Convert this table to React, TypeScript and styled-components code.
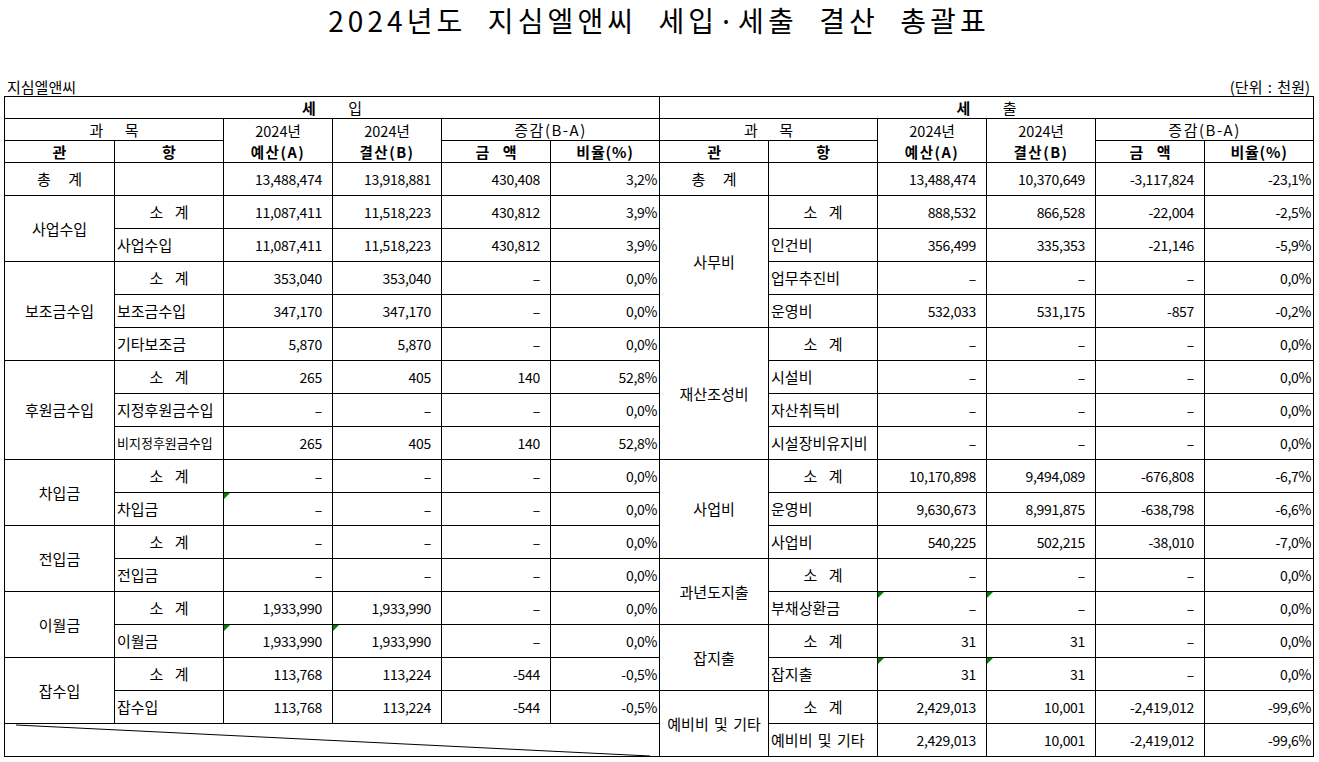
import React from 'react';
import styled, { createGlobalStyle } from 'styled-components';

const Global = createGlobalStyle`
  html, body { margin: 0; padding: 0; background: #fff; }
  body {
    font-family: "Noto Sans CJK KR", "Noto Sans", sans-serif;
    color: #000;
  }
`;

const Page = styled.div`
  width: 1319px;
  padding-left: 4px;
  box-sizing: border-box;
`;

const Title = styled.h1`
  margin: 0;
  width: 1310px;
  height: 40px;
  line-height: 40px;
  font-size: 28px;
  font-weight: 400;
  letter-spacing: 4.1px;
  word-spacing: 11px;
  text-align: center;
  white-space: nowrap;
`;

const Meta = styled.div`
  margin-top: 38px;
  width: 1310px;
  height: 18px;
  display: flex;
  align-items: center;
  justify-content: space-between;
  box-sizing: border-box;
  padding: 0 4px 0 3px;
  font-size: 15px;
  line-height: 18px;
  word-spacing: 2px;
`;

const Sheet = styled.table`
  border-collapse: collapse;
  table-layout: fixed;
  width: 1310px;
  font-size: 15px;
  line-height: 18px;
`;

const HeadRow = styled.tr`
  height: 22px;
`;

const BodyRow = styled.tr`
  height: 33px;
`;

const Head = styled.th<{ $bold?: boolean; $ls?: number }>`
  border: 1px solid #000;
  padding: 0;
  font-weight: ${(p) => (p.$bold ? 700 : 400)};
  letter-spacing: ${(p) => p.$ls ?? 0}px;
  text-align: center;
  vertical-align: middle;
  white-space: nowrap;
`;

const StackHead = styled(Head)`
  font-size: 14.5px;
  line-height: 21px;
`;

const Strong = styled.span<{ $ls?: number }>`
  font-weight: 700;
  letter-spacing: ${(p) => p.$ls ?? 0}px;
`;

const Spaced = styled.span<{ $ws: number }>`
  word-spacing: ${(p) => p.$ws}px;
  white-space: pre;
`;

const Cell = styled.td<{
  $align?: 'left' | 'center' | 'right';
  $padR?: number;
  $padL?: number;
  $size?: number;
  $num?: boolean;
  $flag?: boolean;
}>`
  position: relative;
  border: 1px solid #000;
  padding: 0 ${(p) => p.$padR ?? 0}px 0 ${(p) => p.$padL ?? 0}px;
  text-align: ${(p) => p.$align ?? 'center'};
  vertical-align: middle;
  white-space: nowrap;
  overflow: hidden;
  font-size: ${(p) => p.$size ?? (p.$num ? 14 : 15)}px;
  letter-spacing: ${(p) => (p.$num ? -0.3 : 0)}px;
  word-spacing: 2px;
  &::before {
    content: '';
    display: ${(p) => (p.$flag ? 'block' : 'none')};
    position: absolute;
    top: 0;
    left: 0;
    width: 0;
    height: 0;
    border-style: solid;
    border-width: 6px 6px 0 0;
    border-color: #008000 transparent transparent transparent;
  }
`;

const DiagCell = styled.td`
  border: 1px solid #000;
  padding: 0;
`;

const Diagonal = styled.svg`
  display: block;
  width: 100%;
  height: 32px;
`;

type Side = {
  group?: [string, number, number?];
  item: string;
  v: [string, string, string, string];
  f?: [boolean, boolean];
  size?: number;
};

const SUB = '소 계';
const D = '–';

const left: (Side | null)[] = [
  { group: ['사업수입', 2], item: SUB, v: ['11,087,411', '11,518,223', '430,812', '3,9%'] },
  { item: '사업수입', v: ['11,087,411', '11,518,223', '430,812', '3,9%'] },
  { group: ['보조금수입', 3], item: SUB, v: ['353,040', '353,040', D, '0,0%'] },
  { item: '보조금수입', v: ['347,170', '347,170', D, '0,0%'] },
  { item: '기타보조금', v: ['5,870', '5,870', D, '0,0%'] },
  { group: ['후원금수입', 3], item: SUB, v: ['265', '405', '140', '52,8%'] },
  { item: '지정후원금수입', v: [D, D, D, '0,0%'] },
  { item: '비지정후원금수입', v: ['265', '405', '140', '52,8%'], size: 13 },
  { group: ['차입금', 2], item: SUB, v: [D, D, D, '0,0%'] },
  { item: '차입금', v: [D, D, D, '0,0%'], f: [true, false] },
  { group: ['전입금', 2], item: SUB, v: [D, D, D, '0,0%'] },
  { item: '전입금', v: [D, D, D, '0,0%'] },
  { group: ['이월금', 2], item: SUB, v: ['1,933,990', '1,933,990', D, '0,0%'] },
  { item: '이월금', v: ['1,933,990', '1,933,990', D, '0,0%'], f: [true, true] },
  { group: ['잡수입', 2], item: SUB, v: ['113,768', '113,224', '-544', '-0,5%'] },
  { item: '잡수입', v: ['113,768', '113,224', '-544', '-0,5%'] },
  null,
];

const right: Side[] = [
  { group: ['사무비', 4], item: SUB, v: ['888,532', '866,528', '-22,004', '-2,5%'] },
  { item: '인건비', v: ['356,499', '335,353', '-21,146', '-5,9%'] },
  { item: '업무추진비', v: [D, D, D, '0,0%'] },
  { item: '운영비', v: ['532,033', '531,175', '-857', '-0,2%'] },
  { group: ['재산조성비', 4], item: SUB, v: [D, D, D, '0,0%'] },
  { item: '시설비', v: [D, D, D, '0,0%'] },
  { item: '자산취득비', v: [D, D, D, '0,0%'] },
  { item: '시설장비유지비', v: [D, D, D, '0,0%'] },
  { group: ['사업비', 3], item: SUB, v: ['10,170,898', '9,494,089', '-676,808', '-6,7%'] },
  { item: '운영비', v: ['9,630,673', '8,991,875', '-638,798', '-6,6%'] },
  { item: '사업비', v: ['540,225', '502,215', '-38,010', '-7,0%'] },
  { group: ['과년도지출', 2], item: SUB, v: [D, D, D, '0,0%'] },
  { item: '부채상환금', v: [D, D, D, '0,0%'], f: [true, true] },
  { group: ['잡지출', 2], item: SUB, v: ['31', '31', D, '0,0%'] },
  { item: '잡지출', v: ['31', '31', D, '0,0%'], f: [true, true] },
  { group: ['예비비 및 기타', 2], item: SUB, v: ['2,429,013', '10,001', '-2,419,012', '-99,6%'] },
  { item: '예비비 및 기타', v: ['2,429,013', '10,001', '-2,419,012', '-99,6%'] },
];

function renderSide(s: Side, key: string) {
  const cells: React.ReactNode[] = [];
  if (s.group) {
    cells.push(
      <Cell key={key + 'g'} rowSpan={s.group[1]} $size={s.group[2]}>
        {s.group[0]}
      </Cell>
    );
  }
  if (s.item === SUB) {
    cells.push(
      <Cell key={key + 'i'}>
        <Spaced $ws={8}>{SUB}</Spaced>
      </Cell>
    );
  } else {
    cells.push(
      <Cell key={key + 'i'} $align="left" $padL={2} $size={s.size}>
        {s.item}
      </Cell>
    );
  }
  cells.push(
    <Cell key={key + 'a'} $num $align="right" $padR={10} $flag={s.f?.[0]}>
      {s.v[0]}
    </Cell>,
    <Cell key={key + 'b'} $num $align="right" $padR={10} $flag={s.f?.[1]}>
      {s.v[1]}
    </Cell>,
    <Cell key={key + 'c'} $num $align="right" $padR={10}>
      {s.v[2]}
    </Cell>,
    <Cell key={key + 'd'} $num $align="right" $padR={2}>
      {s.v[3]}
    </Cell>
  );
  return cells;
}

function HeaderBlock({ first, second }: { first: string; second: string }) {
  return (
    <StackHead rowSpan={2}>
      {first}
      <br />
      <Strong $ls={1.5}>{second}</Strong>
    </StackHead>
  );
}

function TotalCells({ v }: { v: [string, string, string, string] }) {
  return (
    <>
      <Cell>
        <Spaced $ws={14}>총 계</Spaced>
      </Cell>
      <Cell />
      <Cell $num $align="right" $padR={10}>{v[0]}</Cell>
      <Cell $num $align="right" $padR={10}>{v[1]}</Cell>
      <Cell $num $align="right" $padR={10}>{v[2]}</Cell>
      <Cell $num $align="right" $padR={2}>{v[3]}</Cell>
    </>
  );
}

export default function App() {
  const cols = [110, 109, 109, 109, 109, 109, 109, 109, 109, 109, 109, 109];
  return (
    <Page>
      <Global />
      <Title>2024년도 지심엘앤씨 세입·세출 결산 총괄표</Title>
      <Meta>
        <span>지심엘앤씨</span>
        <span>(단위 : 천원)</span>
      </Meta>
      <Sheet>
        <colgroup>
          {cols.map((w, i) => (
            <col key={i} style={{ width: w }} />
          ))}
        </colgroup>
        <thead>
          <HeadRow>
            <Head colSpan={6}>
              <Spaced $ws={29}>
                <Strong>세</Strong> 입
              </Spaced>
            </Head>
            <Head colSpan={6}>
              <Spaced $ws={29}>
                <Strong>세</Strong> 출
              </Spaced>
            </Head>
          </HeadRow>
          <HeadRow>
            {[0, 1].map((k) => (
              <React.Fragment key={k}>
                <Head colSpan={2}>
                  <Spaced $ws={18}>과 목</Spaced>
                </Head>
                <HeaderBlock first="2024년" second="예산(A)" />
                <HeaderBlock first="2024년" second="결산(B)" />
                <Head colSpan={2} $ls={1.5}>
                  증감(B-A)
                </Head>
              </React.Fragment>
            ))}
          </HeadRow>
          <HeadRow>
            {[0, 1].map((k) => (
              <React.Fragment key={k}>
                <Head $bold>관</Head>
                <Head $bold>항</Head>
                <Head $bold>
                  <Spaced $ws={10}>금 액</Spaced>
                </Head>
                <Head $bold $ls={0.8}>
                  비율(%)
                </Head>
              </React.Fragment>
            ))}
          </HeadRow>
        </thead>
        <tbody>
          <BodyRow>
            <TotalCells v={['13,488,474', '13,918,881', '430,408', '3,2%']} />
            <TotalCells v={['13,488,474', '10,370,649', '-3,117,824', '-23,1%']} />
          </BodyRow>
          {right.map((r, i) => {
            const l = left[i];
            return (
              <BodyRow key={i}>
                {l ? (
                  renderSide(l, 'l' + i)
                ) : (
                  <DiagCell colSpan={6}>
                    <Diagonal viewBox="0 0 655 32" preserveAspectRatio="none">
                      <line x1="11" y1="1" x2="646" y2="32" stroke="#000" strokeWidth="1" vectorEffect="non-scaling-stroke" />
                    </Diagonal>
                  </DiagCell>
                )}
                {renderSide(r, 'r' + i)}
              </BodyRow>
            );
          })}
        </tbody>
      </Sheet>
    </Page>
  );
}
